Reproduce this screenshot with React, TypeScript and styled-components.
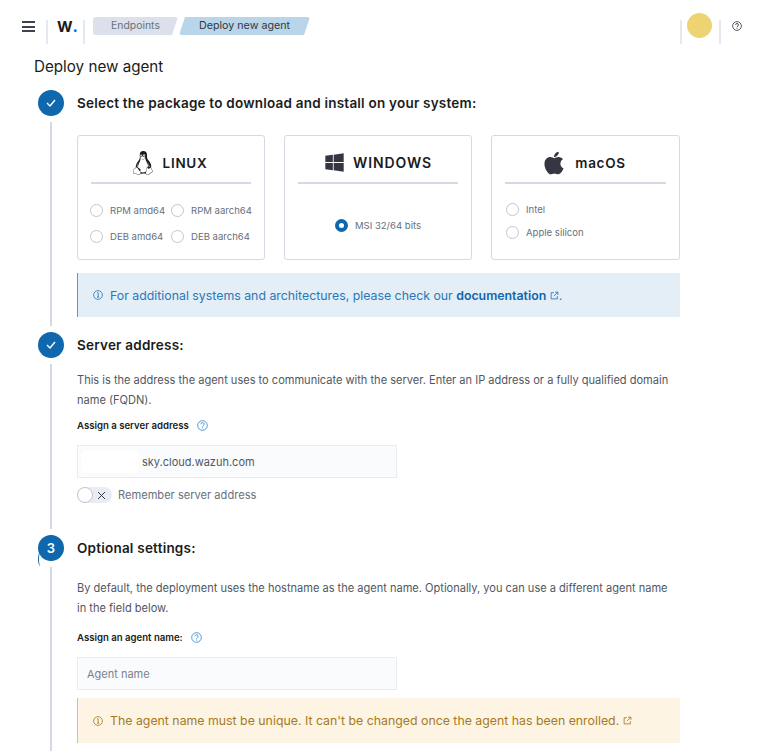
import React from "react";
import styled, { createGlobalStyle } from "styled-components";
import { FaApple, FaLinux, FaWindows } from "react-icons/fa";

const GlobalStyle = createGlobalStyle`
  html, body {
    margin: 0;
    padding: 0;
    background: #fff;
    overflow: hidden;
  }
  * {
    box-sizing: border-box;
  }
  body {
    font-family: Inter, "Liberation Sans", sans-serif;
    color: #343741;
  }
`;

const Page = styled.div`
  width: 772px;
  height: 751px;
  overflow: hidden;
`;

const Header = styled.header`
  display: flex;
  align-items: flex-start;
  height: 44px;
  padding-top: 17px;
`;

const Burger = styled.button`
  display: flex;
  flex-direction: column;
  justify-content: space-between;
  width: 13px;
  height: 11px;
  margin: 4px 11px 0 22px;
  padding: 0;
  border: 0;
  background: none;
  span {
    height: 2px;
    background: #3f434d;
  }
`;

const Divider = styled.div`
  align-self: flex-start;
  width: 2px;
  height: 24px;
  margin-top: 3px;
  background: #e3e8f1;
`;

const Logo = styled.div`
  width: 35px;
  padding-left: 9px;
  font-size: 15px;
  line-height: 18px;
  font-weight: 700;
  color: #1a1c21;
  span {
    font-size: 16px;
    color: #0a6cf0;
  }
`;

const Crumbs = styled.nav`
  display: flex;
  margin-left: 8px;
`;

const Crumb = styled.div<{ $current?: boolean }>`
  height: 18px;
  line-height: 18px;
  font-size: ${(p) => (p.$current ? "10.7px" : "10.4px")};
  text-align: center;
  border-radius: 3px;
  width: ${(p) => (p.$current ? "131px" : "85px")};
  margin-left: ${(p) => (p.$current ? "1px" : "0")};
  color: ${(p) => (p.$current ? "#343741" : "#69707d")};
  background: ${(p) => (p.$current ? "#b9d5e9" : "#dbe0ea")};
  clip-path: ${(p) =>
    p.$current
      ? "polygon(6px 0, 100% 0, calc(100% - 6px) 100%, 0 100%)"
      : "polygon(0 0, 100% 0, calc(100% - 6px) 100%, 0 100%)"};
`;

const HeaderRight = styled.div`
  display: flex;
  align-items: flex-start;
  margin-left: auto;
  padding-right: 30px;
`;

const Avatar = styled.div`
  width: 25px;
  height: 25px;
  margin: -4px 7px 0 5px;
  border-radius: 50%;
  background: #edd371;
`;

const HelpWrap = styled.div`
  display: flex;
  margin: 4px 0 0 11px;
  color: #343741;
`;

const Title = styled.h1`
  margin: 13px 0 0 34px;
  font-size: 15.2px;
  line-height: 20px;
  font-weight: 400;
  color: #1a1c21;
`;

const Steps = styled.div`
  margin: 13px 0 0 38px;
  width: 642px;
`;

const Step = styled.section`
  display: flex;
  gap: 13px;
`;

const Marker = styled.div`
  display: flex;
  flex-direction: column;
  align-items: center;
  flex: 0 0 26px;
`;

const Circle = styled.div<{ $tail?: boolean }>`
  position: relative;
  display: flex;
  align-items: center;
  justify-content: center;
  flex: 0 0 26px;
  width: 26px;
  border-radius: 50%;
  background: #0f67ad;
  color: #fff;
  font-size: 13px;
  font-weight: 600;
  &::after {
    content: "";
    display: ${(p) => (p.$tail ? "block" : "none")};
    position: absolute;
    left: 0;
    top: 17px;
    width: 4px;
    height: 14px;
    border-left: 1px solid #0f67ad;
    border-radius: 50%;
  }
`;

const Line = styled.div`
  flex: 1;
  width: 2px;
  margin: 6px 0;
  background: #d3dae6;
`;

const StepBody = styled.div<{ $pad: number }>`
  flex: 1;
  padding-bottom: ${(p) => p.$pad}px;
`;

const StepTitle = styled.h2`
  margin: 0;
  font-size: 13.5px;
  line-height: 26px;
  font-weight: 600;
  color: #1a1c21;
  letter-spacing: 0.22px;
`;

const Cards = styled.div`
  display: grid;
  grid-template-columns: 188px 188px 189px;
  column-gap: 19px;
  margin-top: 19px;
`;

const Card = styled.div`
  height: 125px;
  padding: 0 13px;
  border: 1px solid #d3dae6;
  border-radius: 3px;
`;

const CardHead = styled.div<{ $tight?: boolean }>`
  display: flex;
  align-items: center;
  justify-content: center;
  gap: 8px;
  height: 48px;
  padding: 7px ${(p) => (p.$tight ? "4px" : "0")} 0 0;
  border-bottom: 2px solid #d3dae6;
  font-size: ${(p) => (p.$tight ? "13.5px" : "14px")};
  font-weight: 600;
  letter-spacing: ${(p) => (p.$tight ? "0.7px" : "0.9px")};
  color: #1a1c21;
`;

const Options = styled.div`
  display: grid;
  grid-template-columns: 81px 1fr;
  row-gap: 8px;
  padding: 17px 0 0 0;
  margin-left: -1px;
  margin-right: -4px;
`;

const OptionsColumn = styled.div`
  display: flex;
  flex-direction: column;
  gap: 5px;
  padding: 16px 0 0 1px;
`;

const OptionsCentered = styled.div`
  display: flex;
  justify-content: center;
  padding: 32px 0 0 0;
`;

const Option = styled.label`
  display: flex;
  align-items: center;
  gap: 7px;
  height: 18px;
  font-size: 9.55px;
  color: #69707d;
  white-space: nowrap;
`;

const Radio = styled.span<{ $checked?: boolean }>`
  flex: 0 0 13px;
  height: 13px;
  border-radius: 50%;
  background: #fff;
  border: ${(p) => (p.$checked ? "4px solid #0f67ad" : "1px solid #c2c6cd")};
`;

const Callout = styled.div<{ $tone: "info" | "warn" }>`
  display: flex;
  align-items: center;
  gap: 7px;
  padding-left: 15px;
  font-size: 12.33px;
  border-left: 1.5px solid ${(p) => (p.$tone === "info" ? "#5e9bcb" : "#f2bb62")};
  color: ${(p) => (p.$tone === "info" ? "#2b77b8" : "#a77a22")};
  background: ${(p) => (p.$tone === "info" ? "#e3eef7" : "#fdf4e4")};
  a {
    font-weight: 600;
    color: #0f67ad;
  }
  svg {
    flex: none;
  }
`;

const InfoCallout = styled(Callout)`
  height: 44px;
  margin-top: 13px;
`;

const Paragraph = styled.p<{ $gap: number }>`
  max-width: 598px;
  margin: ${(p) => p.$gap}px 0 0;
  font-size: 11.05px;
  line-height: 19.5px;
  color: #515761;
`;

const FieldLabel = styled.div`
  display: flex;
  align-items: center;
  gap: 8px;
  height: 14px;
  margin-top: 8px;
  font-size: 9.6px;
  font-weight: 600;
  color: #1a1c21;
  svg {
    color: #3f8fcf;
  }
`;

const FieldWrap = styled.div`
  position: relative;
  width: 320px;
  margin-top: 13px;
`;

const TextInput = styled.input<{ $inset?: boolean }>`
  display: block;
  width: 100%;
  height: 33px;
  padding: 0 0 0 ${(p) => (p.$inset ? "64px" : "9px")};
  border: 1px solid #e8ecf3;
  outline: none;
  background: #fafbfd;
  font-family: inherit;
  font-size: 11px;
  color: #515761;
  &::placeholder {
    color: #7b818c;
    opacity: 1;
  }
`;

const Redaction = styled.div`
  position: absolute;
  left: 4px;
  top: 5px;
  width: 58px;
  height: 23px;
  border-radius: 6px;
  background: #fff;
`;

const SwitchRow = styled.div`
  display: flex;
  align-items: center;
  gap: 6px;
  margin-top: 9px;
  font-size: 11.1px;
  color: #69707d;
`;

const SwitchTrack = styled.div`
  display: flex;
  align-items: center;
  width: 35px;
  height: 16px;
  padding-right: 6px;
  border-radius: 8px;
  background: #e9edf3;
  color: #343741;
`;

const SwitchKnob = styled.span`
  width: 16px;
  height: 16px;
  margin-right: auto;
  border-radius: 50%;
  border: 1px solid #c2c6cd;
  background: #fff;
`;

const WarnCallout = styled(Callout)`
  height: 45px;
  margin-top: 8px;
`;

const OptionalField = styled.div`
  margin-top: 12px;
`;

function IconCircle({ symbol, size = 10 }: { symbol: "i" | "?"; size?: number }) {
  return (
    <svg width={size} height={size} viewBox="0 0 16 16" fill="none" stroke="currentColor">
      <circle cx="8" cy="8" r="7" strokeWidth="1.3" />
      {symbol === "i" ? (
        <path d="M6.6 4.4h1.6v7M6.4 11.4h3.4" strokeWidth="1.4" />
      ) : (
        <path d="M5.8 6.2c0-3 4.6-3 4.6 0 0 1.8-2.3 1.8-2.3 3.6M8.1 11v1.4" strokeWidth="1.4" />
      )}
    </svg>
  );
}

function ExternalIcon() {
  return (
    <svg width="9" height="9" viewBox="0 0 16 16" fill="none" stroke="currentColor" strokeWidth="1.5">
      <path d="M7 3H2v11h11V9M9 2h5v5M14 2L7 9" />
    </svg>
  );
}

function Check() {
  return (
    <svg width="10" height="8" viewBox="0 0 10 8" fill="none" stroke="#fff" strokeWidth="1.4">
      <path d="M1 4l3 3 5-6" />
    </svg>
  );
}

export default function App() {
  return (
    <Page>
      <GlobalStyle />
      <Header>
        <Burger aria-label="menu">
          <span />
          <span />
          <span />
        </Burger>
        <Divider />
        <Logo>
          W<span>.</span>
        </Logo>
        <Divider />
        <Crumbs>
          <Crumb>Endpoints</Crumb>
          <Crumb $current>Deploy new agent</Crumb>
        </Crumbs>
        <HeaderRight>
          <Divider />
          <Avatar />
          <Divider />
          <HelpWrap>
            <IconCircle symbol="?" />
          </HelpWrap>
        </HeaderRight>
      </Header>
      <Title>Deploy new agent</Title>
      <Steps>
        <Step>
          <Marker>
            <Circle>
              <Check />
            </Circle>
            <Line />
          </Marker>
          <StepBody $pad={15}>
            <StepTitle>Select the package to download and install on your system:</StepTitle>
            <Cards>
              <Card>
                <CardHead $tight>
                  <FaLinux size={24} />
                  LINUX
                </CardHead>
                <Options>
                  <Option><Radio />RPM amd64</Option>
                  <Option><Radio />RPM aarch64</Option>
                  <Option><Radio />DEB amd64</Option>
                  <Option><Radio />DEB aarch64</Option>
                </Options>
              </Card>
              <Card>
                <CardHead>
                  <FaWindows size={21} color="#343741" />
                  WINDOWS
                </CardHead>
                <OptionsCentered>
                  <Option><Radio $checked />MSI 32/64 bits</Option>
                </OptionsCentered>
              </Card>
              <Card>
                <CardHead $tight>
                  <FaApple size={26} color="#343741" />
                  macOS
                </CardHead>
                <OptionsColumn>
                  <Option><Radio />Intel</Option>
                  <Option><Radio />Apple silicon</Option>
                </OptionsColumn>
              </Card>
            </Cards>
            <InfoCallout $tone="info">
              <IconCircle symbol="i" />
              <span>
                For additional systems and architectures, please check our{" "}
                <a>documentation</a> <ExternalIcon />.
              </span>
            </InfoCallout>
          </StepBody>
        </Step>
        <Step>
          <Marker>
            <Circle>
              <Check />
            </Circle>
            <Line />
          </Marker>
          <StepBody $pad={32}>
            <StepTitle>Server address:</StepTitle>
            <Paragraph $gap={13}>
              This is the address the agent uses to communicate with the server. Enter an IP address or a fully
              qualified domain name (FQDN).
            </Paragraph>
            <FieldLabel>
              Assign a server address
              <IconCircle symbol="?" size={11} />
            </FieldLabel>
            <FieldWrap>
              <TextInput $inset readOnly value="sky.cloud.wazuh.com" />
              <Redaction />
            </FieldWrap>
            <SwitchRow>
              <SwitchTrack>
                <SwitchKnob />
                <svg width="9" height="9" viewBox="0 0 9 9" stroke="currentColor" strokeWidth="1">
                  <path d="M1 1l7 7M8 1L1 8" />
                </svg>
              </SwitchTrack>
              Remember server address
            </SwitchRow>
          </StepBody>
        </Step>
        <Step>
          <Marker>
            <Circle $tail>3</Circle>
            <Line />
          </Marker>
          <StepBody $pad={30}>
            <StepTitle>Optional settings:</StepTitle>
            <Paragraph $gap={18}>
              By default, the deployment uses the hostname as the agent name. Optionally, you can use a different
              agent name in the field below.
            </Paragraph>
            <OptionalField>
              <FieldLabel>
                Assign an agent name:
                <IconCircle symbol="?" size={11} />
              </FieldLabel>
              <FieldWrap>
                <TextInput placeholder="Agent name" />
              </FieldWrap>
            </OptionalField>
            <WarnCallout $tone="warn">
              <IconCircle symbol="i" />
              <span>
                The agent name must be unique. It can't be changed once the agent has been enrolled. <ExternalIcon />
              </span>
            </WarnCallout>
          </StepBody>
        </Step>
      </Steps>
    </Page>
  );
}
